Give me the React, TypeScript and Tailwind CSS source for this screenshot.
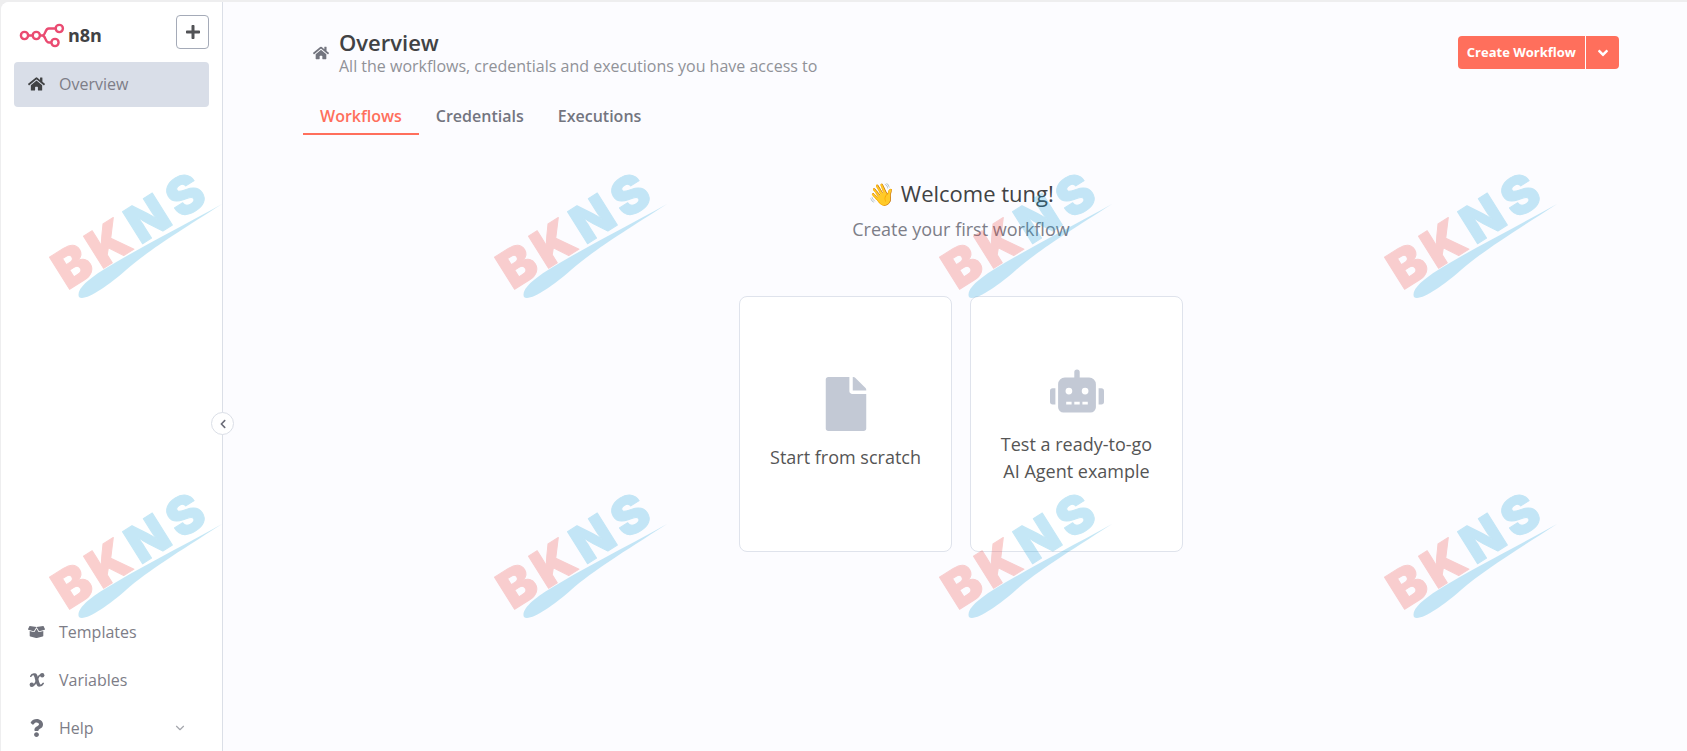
import type { ReactNode } from "react";
import {
  FaAngleDown,
  FaBoxOpen,
  FaChevronLeft,
  FaFile,
  FaHome,
  FaPlus,
  FaQuestion,
  FaRobot,
} from "react-icons/fa";
import { ChevronDown } from "lucide-react";

function Logo() {
  return (
    <svg className="h-7 w-12" viewBox="0 0 48 28" fill="none" stroke="#ea4b71" strokeWidth="2.4" aria-hidden="true">
      <circle cx="6.500" cy="14.500" r="3.600" />
      <circle cx="18.300" cy="14.500" r="3.600" />
      <circle cx="41.300" cy="7.500" r="3.600" />
      <circle cx="37" cy="21.500" r="3.600" />
      <path d="M10.100 14.500h4.600M21.900 14.500h2.400c3.600 0 2.400-7 6.400-7h7M24.300 14.500c3.800 0 2.400 7 6.800 7h2.300" />
    </svg>
  );
}

function VariableIcon() {
  return (
    <svg className="h-4 w-4" viewBox="0 0 16 16" fill="none" stroke="currentColor" strokeLinecap="round" aria-hidden="true">
      <path d="M1.800 4.200C2.400 2.800 3.600 2 5.400 2.200" strokeWidth="1.600" />
      <path d="M6.200 3c1.700 1.600 1.500 7.600 3.500 9.800" strokeWidth="3.400" />
      <path d="M10.200 13.600c1.800.2 3.200-.6 4-2.200" strokeWidth="1.600" />
      <path d="M13 2.500C10.300 2.500 8.800 5.500 7.800 8.200 6.600 11.400 5 13.600 3 13.500" strokeWidth="1.700" />
      <circle cx="13.200" cy="3.200" r="2.200" fill="currentColor" stroke="none" />
      <circle cx="2.800" cy="12.800" r="2.200" fill="currentColor" stroke="none" />
    </svg>
  );
}

function Watermark() {
  return (
    <svg className="h-[320px] w-[445px] shrink-0 opacity-25" viewBox="0 0 445 320" aria-hidden="true">
      <g
        transform="translate(70 289) rotate(-32)"
        fontFamily="Inter, sans-serif"
        fontWeight="900"
        fontSize="52"
        strokeWidth="1"
        strokeLinejoin="round"
      >
        <g fill="#ed4440" stroke="#ed4440">
          <text x="-3">B</text>
          <text x="37">K</text>
        </g>
        <g fill="#1ca4dc" stroke="#1ca4dc">
          <text x="83">N</text>
          <text x="130">S</text>
        </g>
      </g>
      <path
        d="M79 297c-3-7 8-17 24-27 34-21 74-41 119-66-45 29-73 46-96 66-19 17-42 32-47 27z"
        fill="#1ca4dc"
      />
    </svg>
  );
}

function NavItem({ icon, label, active, end }: { icon: ReactNode; label: string; active?: boolean; end?: ReactNode }) {
  return (
    <li>
      <a
        href="#"
        className={
          active
            ? "flex h-[45px] items-center rounded bg-[#d9dee8] pb-0.5 pl-3.5 pr-[22px] text-base text-[#7d7d87]"
            : "flex h-[45px] items-center rounded pb-0.5 pl-3.5 pr-[22px] text-base text-[#7d7d87]"
        }
      >
        <span className={active ? "mr-3.5 flex w-[17px] text-lg text-[#414244]" : "mr-3.5 flex w-[17px] justify-center text-lg text-[#6f717b]"}>
          {icon}
        </span>
        {label}
        {end}
      </a>
    </li>
  );
}

function Sidebar() {
  return (
    <aside className="relative flex w-[222px] shrink-0 flex-col border-r border-[#dbdfe7] bg-white px-[13px] pt-[13px]">
      <div className="flex items-start justify-between">
        <a href="#" className="flex items-center gap-0.5 pl-1 pt-1.5 text-lg leading-7 font-bold text-[#414244]">
          <Logo />
          n8n
        </a>
        <button
          type="button"
          aria-label="Add"
          className="flex h-[34px] w-[33px] items-center justify-center rounded border border-[#a5abb8] text-base text-[#525356]"
        >
          <FaPlus />
        </button>
      </div>
      <nav className="flex grow flex-col justify-between pt-[13px]">
        <ul>
          <NavItem active icon={<FaHome />} label="Overview" />
        </ul>
        <ul className="flex flex-col gap-[3px]">
          <NavItem icon={<FaBoxOpen />} label="Templates" />
          <NavItem icon={<VariableIcon />} label="Variables" />
          <NavItem
            icon={<FaQuestion />}
            label="Help"
            end={<ChevronDown className="ml-auto h-3.5 w-3.5 text-[#a4a6ad]" />}
          />
        </ul>
      </nav>
      <button
        type="button"
        aria-label="Collapse sidebar"
        className="absolute top-[410px] -right-3 z-10 flex h-[23px] w-[23px] items-center justify-center rounded-full border border-[#dbdfe7] bg-white text-[10px] text-[#6b6c78]"
      >
        <FaChevronLeft />
      </button>
    </aside>
  );
}

function Card({ icon, children }: { icon: ReactNode; children: ReactNode }) {
  return (
    <button
      type="button"
      className="flex h-64 w-[213px] flex-col items-center justify-center gap-[13px] rounded-lg border border-[#dfe3ec] bg-white px-6 text-lg leading-[27px] text-[#555]"
    >
      <span className="flex text-[54px] text-[#c3c9d5]">{icon}</span>
      <span>{children}</span>
    </button>
  );
}

export default function App() {
  return (
    <div className="relative min-h-screen overflow-hidden bg-[#eeeeef] pt-0.5 pl-px font-['Open_Sans',sans-serif]">
      <div className="flex min-h-[calc(100vh-2px)] overflow-hidden rounded-tl-lg bg-[#fcfcff]">
        <Sidebar />
        <main className="flex grow flex-col pl-20 pr-[68px]">
          <header className="flex items-start justify-between pt-[27px]">
            <div className="flex items-center gap-2.5 pl-2.5">
              <FaHome className="text-base text-[#73757f]" />
              <div>
                <h1 className="text-[22px] leading-[26px] font-semibold text-[#414244]">Overview</h1>
                <p className="text-base leading-[22px] text-[#909298]">
                  All the workflows, credentials and executions you have access to
                </p>
              </div>
            </div>
            <div className="mt-[7px] flex h-[33px] gap-px text-[13px] font-bold text-white">
              <button type="button" className="rounded-l bg-[#ff6f5c] px-[9px]">
                Create Workflow
              </button>
              <button
                type="button"
                aria-label="More create options"
                className="flex w-[33px] items-center justify-center rounded-r bg-[#ff6f5c] text-base"
              >
                <FaAngleDown />
              </button>
            </div>
          </header>
          <nav className="mt-[19px] flex text-base font-semibold text-[#73757f]">
            <a href="#" className="h-[39px] border-b-2 border-[#ff6f5c] px-[17px] pt-2 text-[#ff6f5c]">Workflows</a>
            <a href="#" className="px-[17px] pt-2">Credentials</a>
            <a href="#" className="px-[17px] pt-2">Executions</a>
          </nav>
          <section className="flex flex-col items-center pt-[42px]">
            <h2 className="text-[22px] leading-8 text-[#414244]">👋 Welcome tung!</h2>
            <p className="mt-[7px] text-lg leading-[27px] text-[#7d7e88]">Create your first workflow</p>
            <div className="mt-[53px] flex gap-[18px]">
              <Card icon={<FaFile />}>Start from scratch</Card>
              <Card icon={<FaRobot />}>Test a ready-to-go AI Agent example</Card>
            </div>
          </section>
        </main>
      </div>
      <div className="pointer-events-none absolute inset-0 flex flex-col overflow-hidden">
        {[0, 1].map((row) => (
          <div key={row} className="flex">
            {[0, 1, 2, 3].map((col) => (
              <Watermark key={col} />
            ))}
          </div>
        ))}
      </div>
    </div>
  );
}
